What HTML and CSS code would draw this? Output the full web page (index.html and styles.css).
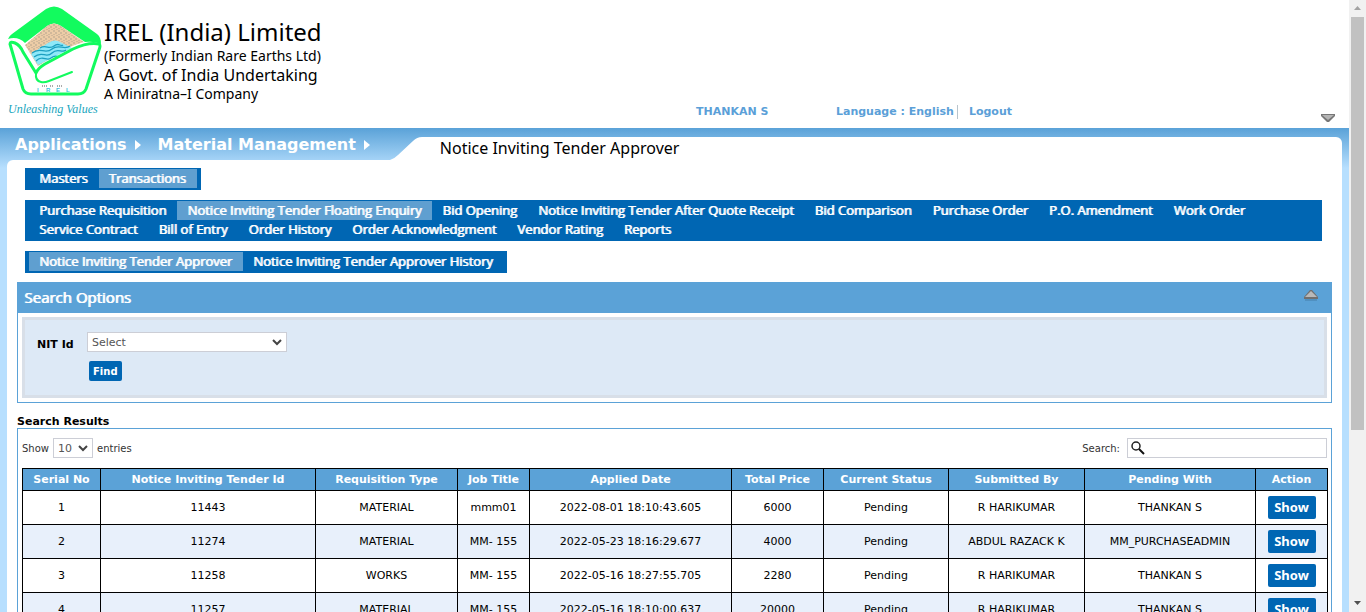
FILE: index.html
```html
<!DOCTYPE html>
<html lang="en">
<head>
<meta charset="utf-8">
<title>Notice Inviting Tender Approver</title>
<link rel="stylesheet" href="styles.css">
</head>
<body>
<div class="page">
  <header class="masthead">
    <div class="brand">
      <div class="emblem">
        <svg width="94" height="94" viewBox="0 0 94 94" aria-hidden="true">
          <defs>
            <pattern id="sand" width="5" height="6" patternUnits="userSpaceOnUse">
              <rect width="5" height="6" fill="#ecccA6"/>
              <path d="M1 0v2M3 2v2M1 4v1M4 5v1" stroke="#b5a48f" stroke-width="1"/>
            </pattern>
          </defs>
          <path d="M0 33 Q1 30 4 28 L38 3 Q46-2 54 3 L89 28 Q93 31 93 38 Q86 35 77 36 L53 20 Q46 15 39 20 L17 37 Q10 30 0 33Z" fill="#12fb5e"/>
          <path d="M17 39 39 20 Q46 15 53 20 L76 36 Q68 38 58 43 L30 60Z" fill="url(#sand)"/>
          <path d="M23 48 L40 37 Q47 32 54 37 L64 42 L30 59Z" fill="#8ee8f8"/>
          <path d="M24 47c8-7 13 2 20-4s12 2 18-3M26 51c8-7 12 2 18-4s10 1 14-3M28 55c7-7 10 1 15-3s7 0 9-2M32 42c6-4 9 2 14-2s6 1 9-1" fill="none" stroke="#1b9fc0" stroke-width="1.300"/>
          <path d="M28 67 Q30 62 37 58 L65 43 Q80 36 91 38 Q93 39 91 44 L78 83 Q76 88 70 88 L23 88 Q17 88 15 83 L2 38 Q2 35 7 37 Q12 39 15 46Z" fill="#fff" stroke="#12fb5e" stroke-width="3" stroke-linejoin="round"/>
          <path d="M28 67 Q27 75 33 76 Q36 77 41 75 L64 66" fill="none" stroke="#12fb5e" stroke-width="2" stroke-linecap="round"/>
          <path d="M34 80h6m2 0h4m3 0h5" stroke="#aaa" stroke-width="2" stroke-dasharray="1 1"/>
          <text class="emblem-name" y="86" x="29 38 48 58">IREL</text>
        </svg>
        <span class="motto">Unleashing Values</span>
      </div>
      <div class="company">
        <div class="company-name">IREL (India) Limited</div>
        <div class="company-former">(Formerly Indian Rare Earths Ltd)</div>
        <div class="company-govt">A Govt. of India Undertaking</div>
        <div class="company-rank">A Miniratna–I Company</div>
      </div>
    </div>
    <div class="session">
      <span class="user">THANKAN S</span>
      <a class="lang" href="#">Language : English</a>
      <a class="logout" href="#">Logout</a>
    </div>
    <button class="icon-btn" aria-label="Collapse header">
      <svg width="14" height="10" viewBox="0 0 14 10"><path d="M0 1h14v2L8 9H6L0 3Z" fill="#777"/><path d="M1 2h12L7 7Z" fill="#b5b5b5"/></svg>
    </button>
  </header>

  <div class="frame">
    <div class="topbar">
      <nav class="crumbs" aria-label="Breadcrumb">
        <a href="#">Applications</a>
        <svg width="7" height="10" viewBox="0 0 7 10"><path d="M0 0 6 5 0 10Z" fill="#fff"/></svg>
        <a href="#">Material Management</a>
        <svg width="7" height="10" viewBox="0 0 7 10"><path d="M0 0 6 5 0 10Z" fill="#fff"/></svg>
      </nav>
      <svg class="slant" width="32" height="23" viewBox="0 0 32 23"><path d="M0 23 Q4 22 8 18 L23 4 Q27 0 32 0V23Z" fill="#fff"/></svg>
      <h1 class="title">Notice Inviting Tender Approver</h1>
    </div>

    <main class="panel">
      <div class="menus">
        <nav class="menu"><a href="#">Masters</a><a class="on" href="#">Transactions</a></nav>
        <nav class="menu wide">
          <a href="#">Purchase Requisition</a><a class="on" href="#">Notice Inviting Tender Floating Enquiry</a><a href="#">Bid Opening</a><a href="#">Notice Inviting Tender After Quote Receipt</a><a href="#">Bid Comparison</a><a href="#">Purchase Order</a><a href="#">P.O. Amendment</a><a href="#">Work Order</a><a href="#">Service Contract</a><a href="#">Bill of Entry</a><a href="#">Order History</a><a href="#">Order Acknowledgment</a><a href="#">Vendor Rating</a><a href="#">Reports</a>
        </nav>
        <nav class="menu"><a class="on" href="#">Notice Inviting Tender Approver</a><a href="#">Notice Inviting Tender Approver History</a></nav>
      </div>

      <section class="options">
        <div class="options-head">
          <h2>Search Options</h2>
          <button class="icon-btn" aria-label="Collapse search options">
            <svg width="16" height="11" viewBox="0 0 16 11"><path d="M7 0h2l6 7v2H1V7Z" fill="#707070"/><path d="M8 1l6 6H2Z" fill="#b9b9b9"/><path d="M2 10h12" stroke="#477fa9"/></svg>
          </button>
        </div>
        <form class="options-form">
          <label for="nit">NIT Id</label>
          <span class="picker">
            <select id="nit"><option>Select</option></select>
            <svg width="10" height="7" viewBox="0 0 10 7"><path d="M1 1 5 5 9 1" fill="none" stroke="#444" stroke-width="2"/></svg>
          </span>
          <button class="find" type="button">Find</button>
        </form>
      </section>

      <h3 class="results-title">Search Results</h3>
      <section class="results">
        <div class="tools">
          <div class="length">
            <label for="len">Show</label>
            <span class="picker small">
              <select id="len"><option>10</option></select>
              <svg width="10" height="7" viewBox="0 0 10 7"><path d="M1 1 5 5 9 1" fill="none" stroke="#444" stroke-width="2"/></svg>
            </span>
            <span class="unit">entries</span>
          </div>
          <div class="filter">
            <label for="q">Search:</label>
            <span class="searchbox">
              <svg width="14" height="14" viewBox="0 0 14 14"><circle cx="5" cy="5" r="4" fill="none" stroke="#222" stroke-width="1.500"/><path d="M8 8l5 5" stroke="#111" stroke-width="2"/></svg>
              <input id="q" type="text">
            </span>
          </div>
        </div>
        <table>
          <colgroup><col class="c-serial"><col class="c-id"><col class="c-type"><col class="c-job"><col class="c-date"><col class="c-price"><col class="c-status"><col class="c-by"><col class="c-with"><col class="c-act"></colgroup>
          <thead><tr><th>Serial No</th><th>Notice Inviting Tender Id</th><th>Requisition Type</th><th>Job Title</th><th>Applied Date</th><th>Total Price</th><th>Current Status</th><th>Submitted By</th><th>Pending With</th><th>Action</th></tr></thead>
          <tbody>
            <tr><td>1</td><td>11443</td><td>MATERIAL</td><td>mmm01</td><td>2022-08-01 18:10:43.605</td><td>6000</td><td>Pending</td><td>R HARIKUMAR</td><td>THANKAN S</td><td><button class="show">Show</button></td></tr>
            <tr><td>2</td><td>11274</td><td>MATERIAL</td><td>MM- 155</td><td>2022-05-23 18:16:29.677</td><td>4000</td><td>Pending</td><td>ABDUL RAZACK K</td><td>MM_PURCHASEADMIN</td><td><button class="show">Show</button></td></tr>
            <tr><td>3</td><td>11258</td><td>WORKS</td><td>MM- 155</td><td>2022-05-16 18:27:55.705</td><td>2280</td><td>Pending</td><td>R HARIKUMAR</td><td>THANKAN S</td><td><button class="show">Show</button></td></tr>
            <tr><td>4</td><td>11257</td><td>MATERIAL</td><td>MM- 155</td><td>2022-05-16 18:10:00.637</td><td>20000</td><td>Pending</td><td>R HARIKUMAR</td><td>THANKAN S</td><td><button class="show">Show</button></td></tr>
          </tbody>
        </table>
      </section>
    </main>
  </div>
</div>
<div class="scrollbar" aria-hidden="true">
  <svg width="17" height="17" viewBox="0 0 17 17"><path d="M5 10h7L8.500 6Z" fill="#a3a3a3"/></svg>
  <div class="thumb"></div>
  <svg class="down" width="17" height="17" viewBox="0 0 17 17"><path d="M5 6h7L8.500 10Z" fill="#505050"/></svg>
</div>
</body>
</html>
```
FILE: styles.css
```css
* { box-sizing: border-box; }
body {
  margin: 0;
  height: 100vh;
  display: flex;
  overflow: hidden;
  background: #fff;
  color: #000;
  font: 11px/14px "DejaVu Sans", sans-serif;
}
a { text-decoration: none; color: inherit; }
h1, h2, h3 { margin: 0; }
button { border: 0; cursor: pointer; }
svg { display: block; flex: none; }
.page { flex: 1; min-width: 0; height: 100vh; overflow: hidden; }

/* Masthead */
.masthead { display: flex; height: 128px; align-items: flex-end; padding: 0 14px 0 8px; }
.brand { display: flex; flex: 1; align-self: flex-start; padding-top: 6px; gap: 2px; }
.emblem { width: 94px; }
.emblem-name { font: bold 6px "Liberation Sans", sans-serif; fill: #3cc4dc; }
.motto { display: block; white-space: nowrap; color: #17a5bd; font: italic 12px/18px "Liberation Serif", serif; }
.company { padding-top: 11px; font-family: "Noto Sans", sans-serif; white-space: nowrap; }
.company-name { font-size: 24px; line-height: 30px; }
.company-former { font-size: 14px; line-height: 18px; }
.company-govt { font-size: 16px; line-height: 20px; }
.company-rank { font-size: 14px; line-height: 18px; }
.session { display: flex; padding-bottom: 9px; font-weight: bold; color: #5b9fd8; }
.user { width: 140px; }
.lang { padding-right: 3px; border-right: 1px solid #b8c4cc; }
.logout { padding-left: 11px; margin-right: 309px; }
.icon-btn { padding: 0; background: none; }
.masthead .icon-btn { padding-bottom: 5px; }

/* Blue frame */
.frame { padding: 0 7px; background: linear-gradient(#5aa2d8, #b7dffe 40px); }
.topbar { display: flex; align-items: flex-end; height: 32px; }
.crumbs { display: flex; align-items: center; height: 32px; padding: 2px 19px 0 8px; gap: 8px; color: #fff; font: bold 16px/20px "DejaVu Sans", sans-serif; }
.crumbs a + svg + a { margin-left: 8px; }
.title { flex: 1; height: 23px; padding-left: 18px; background: #fff; border-top-right-radius: 6px; font: 16px/22px "Noto Sans", sans-serif; }
.panel { min-height: 484px; padding: 8px 10px 0; background: #fff; border-top-left-radius: 6px; }

/* Menus */
.menus { display: grid; justify-items: start; gap: 10px; padding: 0 10px 0 8px; margin-bottom: 9px; }
.menu { display: flex; flex-wrap: wrap; padding: 1px 4px 2px; background: #0066b3; color: #fff; font: 13px/19px "Open Sans", sans-serif; text-shadow: 1px 0 0 #fff; }
.menu.wide { justify-self: stretch; }
.menu a { padding: 0 11px 0 10px; }
.menu .on { background: #5f9fd0; }

/* Search options */
.options { border: 1px solid #5ba2d7; }
.options-head { display: flex; justify-content: space-between; height: 30px; padding: 0 12px 0 6px; background: #5ba2d7; }
.options-head h2 { color: #fff; font: 15px/28px "Open Sans", sans-serif; text-shadow: 1px 0 0 #fff; }
.options-head .icon-btn { align-self: flex-start; padding-top: 7px; }
.options-form {
  display: grid;
  grid-template-columns: 40px 200px;
  column-gap: 10px;
  row-gap: 9px;
  justify-content: start;
  align-items: center;
  margin: 4px;
  padding: 12px 12px 14px;
  border: 3px solid #d8dfe8;
  background: #dde9f6;
}
.options-form label { font-weight: bold; padding-top: 6px; }
.picker { display: grid; align-items: center; }
.picker select, .picker svg { grid-area: 1 / 1; }
.picker svg { justify-self: end; margin-right: 5px; pointer-events: none; }
.picker select { appearance: none; width: 100%; height: 20px; padding: 0 4px; border: 1px solid #ccced6; border-radius: 0; background: #fff; color: #555; font: 11px "DejaVu Sans", sans-serif; }
.find { grid-column: 2; justify-self: start; height: 20px; margin-left: 2px; padding: 0 4px; border-radius: 2px; background: #0066b3; color: #fff; font: bold 10px "DejaVu Sans", sans-serif; }

/* Results */
.results-title { padding-top: 12px; font-size: 11px; line-height: 13px; }
.results { border: 1px solid #5ba2d7; border-bottom: 0; padding: 9px 3px 0 4px; }
.tools { display: flex; justify-content: space-between; margin-bottom: 10px; color: #333; font-size: 10px; }
.length, .filter { display: flex; align-items: center; gap: 4px; }
.length label, .unit, .filter label { padding-top: 2px; }
.filter { gap: 7px; padding-right: 1px; }
.picker.small { width: 40px; }
.searchbox { display: flex; align-items: center; width: 200px; height: 20px; padding: 0 3px; border: 1px solid #ccced6; }
.searchbox input { flex: 1; min-width: 0; height: 18px; border: 0; outline: 0; background: none; font: 11px "DejaVu Sans", sans-serif; }
table { width: 100%; table-layout: fixed; border-collapse: collapse; text-align: center; }
th, td { border: 1px solid #000; padding: 0; }
th { height: 22px; padding-top: 1px; background: #5ba2d7; color: #fff; }
td { height: 34px; padding-top: 1px; }
tbody tr:nth-child(even) { background: #e8f0fb; }
.c-serial { width: 78px; }
.c-id { width: 215px; }
.c-type { width: 142px; }
.c-job { width: 72px; }
.c-date { width: 202px; }
.c-price { width: 92px; }
.c-status { width: 125px; }
.c-by { width: 136px; }
.c-with { width: 171px; }
.c-act { width: 72px; }
.show { display: block; height: 23px; width: 48px; margin: 0 auto 2px; padding: 0 0 1px; border-radius: 2px; background: #0066b3; color: #fff; font: bold 13px "Noto Sans", sans-serif; }

/* Scroll bar */
.scrollbar { display: flex; flex-direction: column; width: 17px; background: #f1f1f1; }
.thumb { flex: 0 0 67.500%; margin: 0 2px; background: #c1c1c1; }
.down { margin-top: auto; }
```
